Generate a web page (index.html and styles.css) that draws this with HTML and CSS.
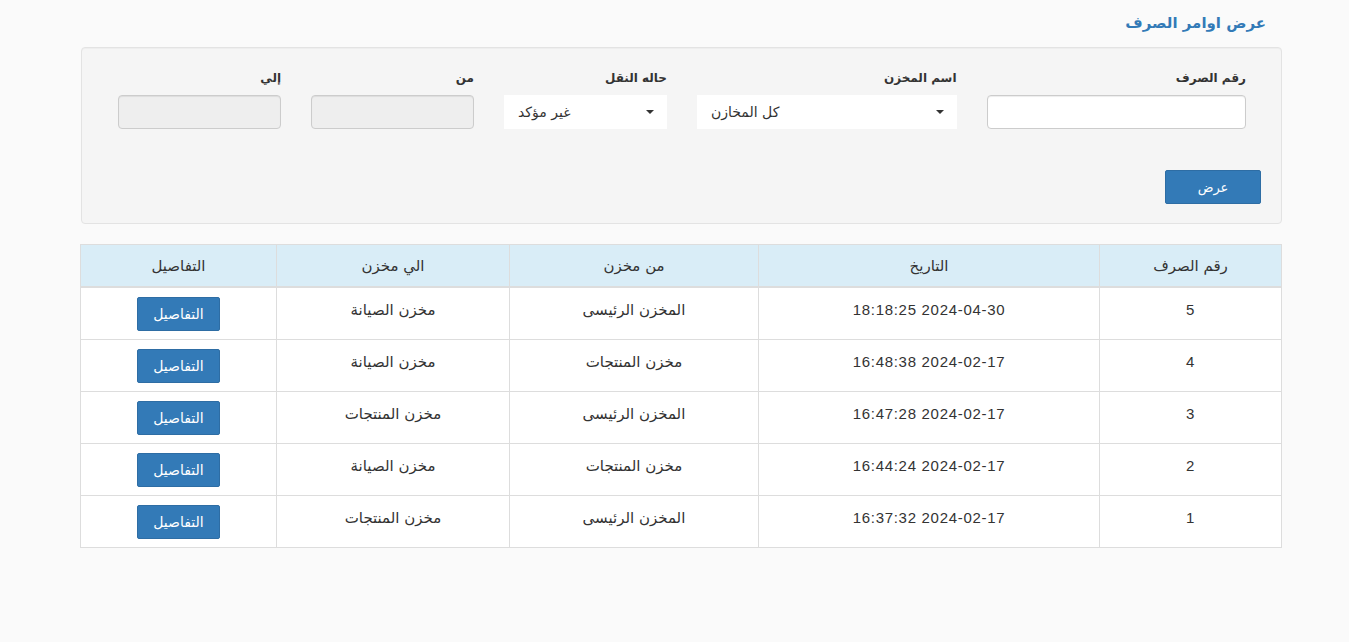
FILE: index.html
```html
<!DOCTYPE html>
<html lang="ar" dir="rtl">
<head>
<meta charset="utf-8">
<title>عرض اوامر الصرف</title>
<link rel="stylesheet" href="styles.css">
</head>
<body>
<div class="page">
  <h3 class="title">عرض اوامر الصرف</h3>
  <div class="well">
    <div class="filters">
      <div class="field">
        <label class="label">رقم الصرف</label>
        <input class="input" type="text">
      </div>
      <div class="field">
        <label class="label">اسم المخزن</label>
        <div class="select"><span class="select-text">كل المخازن</span><span class="caret"></span></div>
      </div>
      <div class="field">
        <label class="label">حاله النقل</label>
        <div class="select"><span class="select-text">غير مؤكد</span><span class="caret"></span></div>
      </div>
      <div class="field">
        <label class="label">من</label>
        <input class="input input-disabled" type="text" disabled>
      </div>
      <div class="field">
        <label class="label">إلي</label>
        <input class="input input-disabled" type="text" disabled>
      </div>
    </div>
    <div class="actions">
      <button class="btn btn-show">عرض</button>
    </div>
  </div>

  <table class="grid">
    <colgroup>
      <col class="c1"><col class="c2"><col class="c3"><col class="c4"><col class="c5">
    </colgroup>
    <thead>
      <tr><th>رقم الصرف</th><th>التاريخ</th><th>من مخزن</th><th>الي مخزن</th><th>التفاصيل</th></tr>
    </thead>
    <tbody>
      <tr><td><span class="num">5</span></td><td><span class="num">2024-04-30 18:18:25</span></td><td>المخزن الرئيسى</td><td>مخزن الصيانة</td><td><button class="btn btn-details">التفاصيل</button></td></tr>
      <tr><td><span class="num">4</span></td><td><span class="num">2024-02-17 16:48:38</span></td><td>مخزن المنتجات</td><td>مخزن الصيانة</td><td><button class="btn btn-details">التفاصيل</button></td></tr>
      <tr><td><span class="num">3</span></td><td><span class="num">2024-02-17 16:47:28</span></td><td>المخزن الرئيسى</td><td>مخزن المنتجات</td><td><button class="btn btn-details">التفاصيل</button></td></tr>
      <tr><td><span class="num">2</span></td><td><span class="num">2024-02-17 16:44:24</span></td><td>مخزن المنتجات</td><td>مخزن الصيانة</td><td><button class="btn btn-details">التفاصيل</button></td></tr>
      <tr><td><span class="num">1</span></td><td><span class="num">2024-02-17 16:37:32</span></td><td>المخزن الرئيسى</td><td>مخزن المنتجات</td><td><button class="btn btn-details">التفاصيل</button></td></tr>
    </tbody>
  </table>
</div>
</body>
</html>
```

FILE: styles.css
```css
* { box-sizing: border-box; }

html, body {
  margin: 0;
  padding: 0;
  background: #fafafa;
}

body {
  font-family: "DejaVu Sans", "Liberation Sans", sans-serif;
  font-size: 13px;
  color: #333;
  direction: rtl;
}

.page {
  padding: 0 67px 0 81px;
}

.title {
  margin: 0;
  padding: 12px 16px 0 0;
  height: 47px;
  font-size: 15px;
  line-height: 22px;
  font-weight: bold;
  color: #337ab7;
}

.well {
  background: #f5f5f5;
  border: 1px solid #e3e3e3;
  border-radius: 4px;
  padding: 20px 20px 19px 21px;
  box-shadow: inset 0 1px 1px rgba(0,0,0,.03);
}

.filters {
  display: grid;
  grid-template-columns: 3fr 3fr 2fr 2fr 2fr;
}

.field {
  padding: 0 15px;
  display: flex;
  flex-direction: column;
}

.label {
  font-weight: bold;
  font-size: 12px;
  line-height: 20px;
  margin-bottom: 7px;
  color: #333;
}

.input {
  height: 34px;
  width: 100%;
  border: 1px solid #ccc;
  border-radius: 4px;
  background: #fff;
  box-shadow: inset 0 1px 1px rgba(0,0,0,.075);
  font: inherit;
  padding: 6px 12px;
}

.input-disabled {
  background: #eee;
}

.select {
  height: 34px;
  background: #fff;
  direction: ltr;
  display: flex;
  align-items: center;
  justify-content: space-between;
  padding: 0 13px 0 14px;
  font-size: 14px;
  color: #333;
}

.caret {
  width: 0;
  height: 0;
  border-top: 4px solid #333;
  border-left: 4px solid transparent;
  border-right: 4px solid transparent;
}

.actions {
  margin-top: 41px;
  display: flex;
}

.btn {
  font-family: inherit;
  color: #fff;
  background: #337ab7;
  border: 1px solid #2e6da4;
  border-radius: 2px;
  height: 34px;
  font-size: 13px;
  cursor: pointer;
}

.btn-show {
  width: 96px;
}

.grid {
  margin-top: 20px;
  width: 100%;
  border-collapse: collapse;
  table-layout: fixed;
  background: #fff;
  border: 1px solid #ddd;
}

.c1 { width: 182px; }
.c2 { width: 341px; }
.c3 { width: 249px; }
.c4 { width: 233px; }
.c5 { width: 196px; }

.grid th {
  background: #d9edf7;
  font-weight: normal;
  font-size: 15px;
  line-height: 22px;
  padding: 10px 8px 9px;
  border: 1px solid #ddd;
  border-bottom-width: 2px;
  text-align: center;
}

.grid td {
  border: 1px solid #ddd;
  text-align: center;
  vertical-align: top;
  padding: 9px 8px 8px;
  line-height: 26px;
  font-size: 15px;
}

.num {
  font-family: "Liberation Sans", sans-serif;
  font-size: 15px;
  letter-spacing: 0.7px;
}

.btn-details {
  width: 83px;
  vertical-align: top;
  font-size: 14px;
}
```
